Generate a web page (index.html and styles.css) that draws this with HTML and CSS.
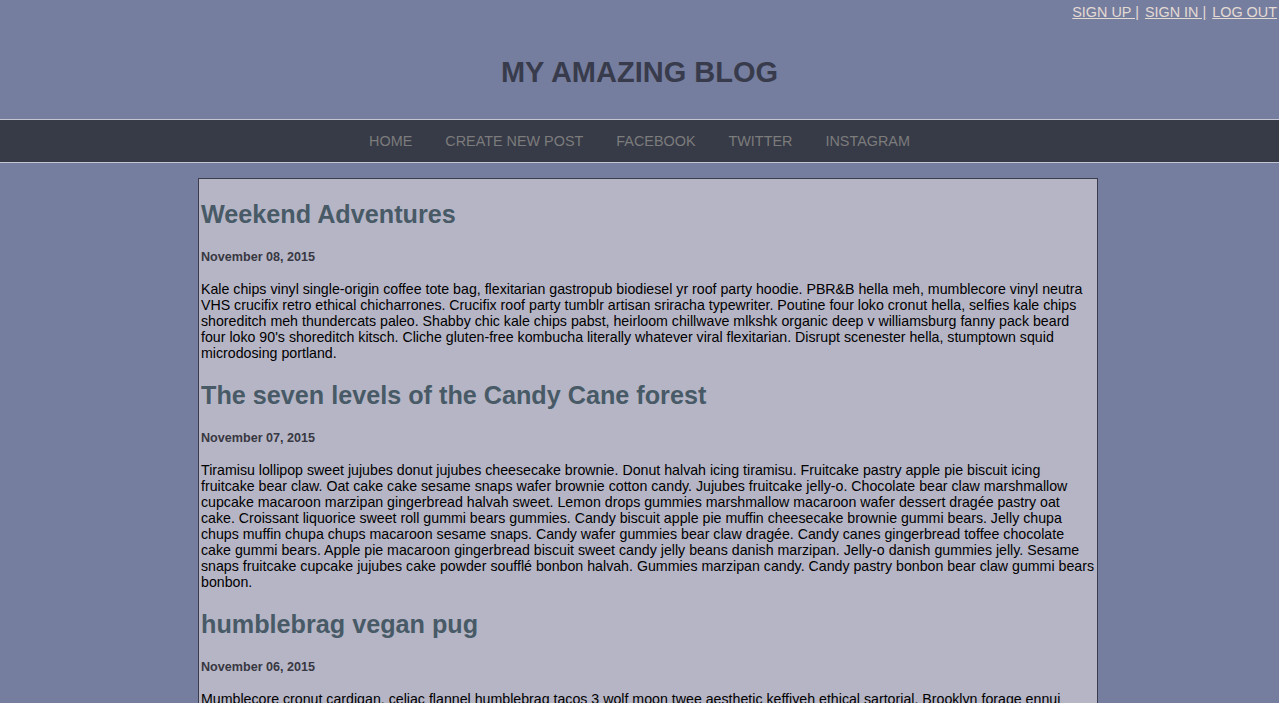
FILE: index.html
```html
<!DOCTYPE html>
<html>
<head>
<meta charset="utf-8">
<title>My Amazing Blog</title>
<link rel="stylesheet" href="styles.css">
</head>
<body>
<header class="site-header">
  <div class="auth-links">
    <a href="#">SIGN UP |</a>
    <a href="#">SIGN IN |</a>
    <a href="#">LOG OUT</a>
  </div>
  <h1 class="site-title">MY AMAZING BLOG</h1>
</header>
<nav class="main-nav">
  <a href="#">HOME</a>
  <a href="#">CREATE NEW POST</a>
  <a href="#">FACEBOOK</a>
  <a href="#">TWITTER</a>
  <a href="#">INSTAGRAM</a>
</nav>
<main class="posts">
  <article class="post">
    <h2 class="post-title">Weekend Adventures</h2>
    <h5 class="post-date">November 08, 2015</h5>
    <p class="post-body">Kale chips vinyl single-origin coffee tote bag, flexitarian gastropub biodiesel yr roof party hoodie. PBR&amp;B hella meh, mumblecore vinyl neutra VHS crucifix retro ethical chicharrones. Crucifix roof party tumblr artisan sriracha typewriter. Poutine four loko cronut hella, selfies kale chips shoreditch meh thundercats paleo. Shabby chic kale chips pabst, heirloom chillwave mlkshk organic deep v williamsburg fanny pack beard four loko 90's shoreditch kitsch. Cliche gluten-free kombucha literally whatever viral flexitarian. Disrupt scenester hella, stumptown squid microdosing portland.</p>
  </article>
  <article class="post">
    <h2 class="post-title">The seven levels of the Candy Cane forest</h2>
    <h5 class="post-date">November 07, 2015</h5>
    <p class="post-body">Tiramisu lollipop sweet jujubes donut jujubes cheesecake brownie. Donut halvah icing tiramisu. Fruitcake pastry apple pie biscuit icing fruitcake bear claw. Oat cake cake sesame snaps wafer brownie cotton candy. Jujubes fruitcake jelly-o. Chocolate bear claw marshmallow cupcake macaroon marzipan gingerbread halvah sweet. Lemon drops gummies marshmallow macaroon wafer dessert dragée pastry oat cake. Croissant liquorice sweet roll gummi bears gummies. Candy biscuit apple pie muffin cheesecake brownie gummi bears. Jelly chupa chups muffin chupa chups macaroon sesame snaps. Candy wafer gummies bear claw dragée. Candy canes gingerbread toffee chocolate cake gummi bears. Apple pie macaroon gingerbread biscuit sweet candy jelly beans danish marzipan. Jelly-o danish gummies jelly. Sesame snaps fruitcake cupcake jujubes cake powder soufflé bonbon halvah. Gummies marzipan candy. Candy pastry bonbon bear claw gummi bears bonbon.</p>
  </article>
  <article class="post">
    <h2 class="post-title">humblebrag vegan pug</h2>
    <h5 class="post-date">November 06, 2015</h5>
    <p class="post-body">Mumblecore cronut cardigan, celiac flannel humblebrag tacos 3 wolf moon twee aesthetic keffiyeh ethical sartorial. Brooklyn forage ennui vinyl, trust fund pickled tofu hashtag banjo. Pitchfork squid listicle, waistcoat church-key chambray kinfolk echo park. Small batch artisan fixie, pop-up gentrify narwhal bicycle rights.</p>
  </article>
</main>
</body>
</html>
```
FILE: styles.css
```css
html, body {
  margin: 0;
  padding: 0;
}

body {
  background: #767e9f;
  font-family: "Liberation Sans", Arial, Helvetica, sans-serif;
  color: #000;
}

.site-header {
  display: flex;
  flex-direction: column;
}

.auth-links {
  display: flex;
  justify-content: flex-end;
  gap: 6px;
  padding: 4px 2px 0 0;
  height: 20px;
  line-height: 16px;
  font-size: 14.4px;
}

.auth-links a {
  color: #e4dad4;
  text-decoration: underline;
}

.site-title {
  margin: 32px 0 31px;
  text-align: center;
  font-size: 29px;
  line-height: 32px;
  font-weight: bold;
  color: #383b4b;
}

.main-nav {
  display: flex;
  justify-content: center;
  gap: 33px;
  background: #373a47;
  border-top: 1px solid #c4c6d4;
  border-bottom: 1px solid #c4c6d4;
  height: 42px;
  align-items: center;
  font-size: 14.4px;
}

.main-nav a {
  color: #7c7c7c;
  text-decoration: none;
}

.posts {
  width: 894px;
  margin: 15px 0 0 198px;
  padding: 1px 2px;
  background: #b6b5c6;
  border: 1px solid #3b3c4c;
}

.post-title {
  margin: 20px 0;
  font-size: 25.2px;
  line-height: 28px;
  color: #475a66;
  font-weight: bold;
}

.post-date {
  margin: 22px 0 16px;
  font-size: 12.6px;
  line-height: 15px;
  color: #383842;
  font-weight: bold;
}

.post-body {
  margin: 14px 0;
  font-size: 14.2px;
  line-height: 16px;
}
```
